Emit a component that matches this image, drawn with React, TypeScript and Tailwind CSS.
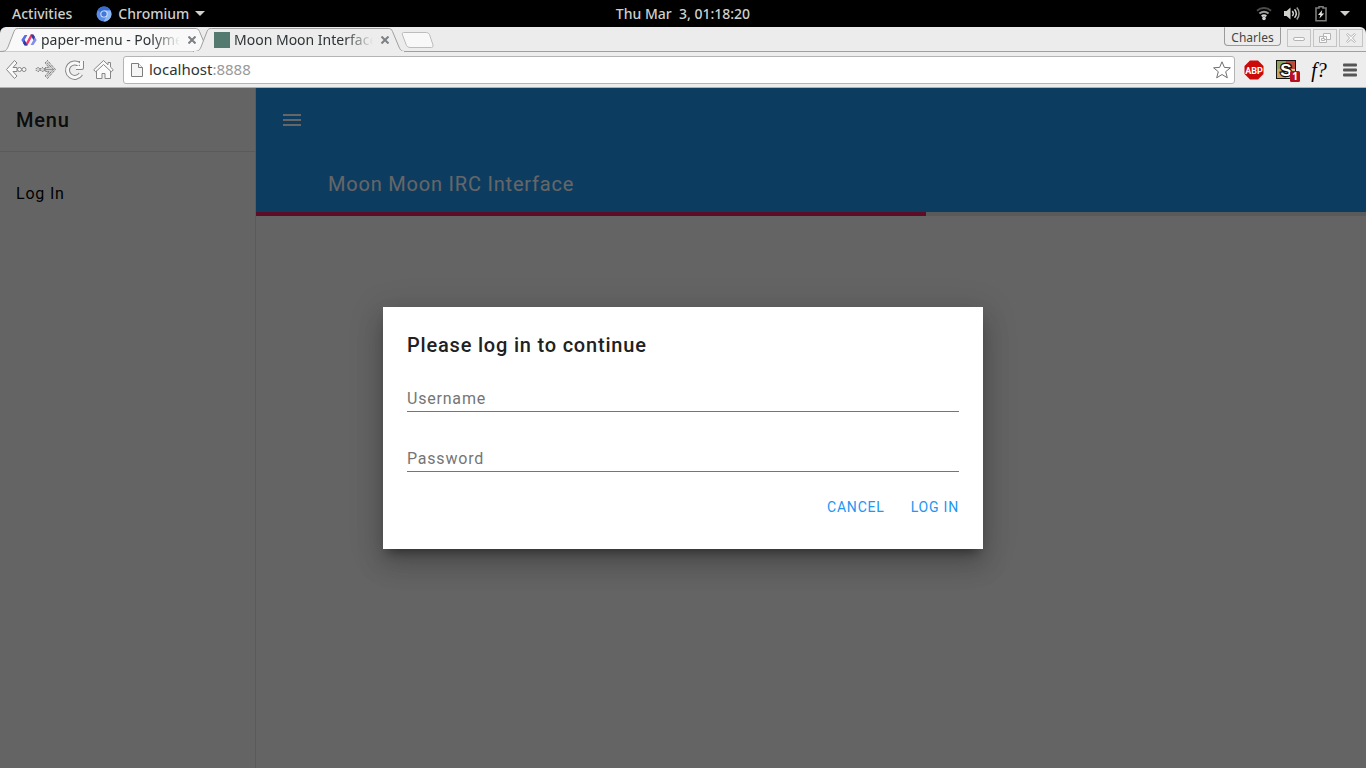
import { ReactNode, useId, useState } from "react";
import clsx from "clsx";

const TABS = [
  { id: "paper-menu", title: "paper-menu - Polymer", active: false },
  { id: "moon", title: "Moon Moon Interface", active: true },
];

const PROGRESS = 60.35;

function ChromiumLogo() {
  return (
    <svg width="16" height="16" viewBox="0 0 16 16" aria-hidden="true">
      <circle cx="8" cy="8" r="7.5" fill="#5a8ee6" />
      <path d="M8 8 1.5 4.2A7.5 7.5 0 0 1 14.6 4.5H8z" fill="#3a6bd0" />
      <path d="M14.6 4.6A7.5 7.5 0 0 1 7.6 15.5L11 9.6 8 4.6z" fill="#8db9f7" />
      <circle cx="8" cy="8" r="3.6" fill="#e4eefc" />
      <circle cx="8" cy="8" r="2.7" fill="#4377d8" />
    </svg>
  );
}

function Caret() {
  return (
    <svg width="10" height="5" viewBox="0 0 10 5" aria-hidden="true">
      <path d="M0 0h10L5 5z" fill="#d0d0cc" />
    </svg>
  );
}

function SystemBar() {
  return (
    <header className="grid h-[27px] shrink-0 grid-cols-[1fr_auto_1fr] items-center bg-black text-sm font-medium text-[#cfcfcb]">
      <div className="flex items-center gap-6 pl-3">
        <button>Activities</button>
        <button className="flex items-center gap-1.5">
          <ChromiumLogo />
          Chromium
          <Caret />
        </button>
      </div>
      <time className="whitespace-pre">Thu Mar  3, 01:18:20</time>
      <div className="flex items-center justify-end gap-3 pr-4">
        <svg width="16" height="16" viewBox="0 0 16 16" fill="none" strokeWidth="2" aria-hidden="true">
          <path d="M1 4.8c4-3.600 10-3.600 14 0" stroke="#4c4c4a" />
          <path d="M3.400 7.600c2.800-2.300 6.400-2.300 9.200 0" stroke="#9a9a97" />
          <path d="M5.600 10.200c1.600-1.100 3.200-1.100 4.800 0" stroke="#d0d0cc" />
          <circle cx="8" cy="12.400" r="1.800" fill="#d0d0cc" />
        </svg>
        <svg width="16" height="16" viewBox="0 0 16 16" fill="none" stroke="#d0d0cc" strokeWidth="1.500" aria-hidden="true">
          <path d="M0 5h2.500L6.500 1.500v12L2.500 10H0z" fill="#d0d0cc" stroke="none" />
          <path d="M8.300 5c1.200 1.500 1.200 3.600 0 5" />
          <path d="M10.500 3.200c2.200 2.600 2.200 6 0 8.600" />
          <path d="M12.800 1.500c3 3.400 3 8.600 0 12" stroke="#9a9a97" />
        </svg>
        <svg width="16" height="16" viewBox="-1 0 16 16" aria-hidden="true">
          <path d="M6 2V0.800h4V2h3v12.800H3V2z" fill="none" stroke="#7c7c7a" strokeWidth="1.600" />
          <path d="M9.200 4 5 9h2.400l-1 3.600 4.800-5.200H8.600z" fill="#e6e6e2" />
        </svg>
        <Caret />
      </div>
    </header>
  );
}

function PolymerLogo() {
  return (
    <svg width="16" height="16" viewBox="0 0 16 16" aria-hidden="true">
      <path d="M3.600 3h2.800L3.600 8l2.600 5H3.400L0.300 8z" fill="#5a6be0" />
      <path d="M12.400 3 15.700 8l-3.300 5H9.600L12.400 8l-2-3.600z" fill="#7f8fe8" />
      <path d="M9.600 2.500h2.800L6.400 13.500H3.600z" fill="#ec3a72" />
      <path d="M9.600 2.500h2.800l1.600 2.600-1.600 3z" fill="#303f9f" />
      <path d="M3.600 13.500h2.800L3.600 8 2 11z" fill="#303f9f" />
    </svg>
  );
}

function BrowserTab({ id, title, active }: { id: string; title: string; active: boolean }) {
  return (
    <div className={clsx("relative flex h-[25px] w-[212px] items-center pl-[21px]", active && "z-10 -ml-[19px]")}>
      <svg width="212" height="25" viewBox="0 0 212 25" className="absolute inset-0" aria-hidden="true">
        <path
          d="M0 24.5C5 24.5 6.500 23.500 8 20L14 4.500C15 2 16 1.500 18.500 1.500H195C197.500 1.500 198.500 2 199.500 4.500L206 20C207.500 23.500 209 24.500 212 24.500"
          fill={active ? "#ededed" : "#f9f9f9"}
          stroke="#9f9f9f"
        />
        {active && <path d="M1 24.500H211" stroke="#ededed" />}
      </svg>
      <button className="relative flex items-center gap-1 text-left">
        {id === "moon" ? <span className="size-4 bg-[#54796f]" /> : <PolymerLogo />}
        <span className="w-[139px] overflow-hidden whitespace-nowrap text-sm text-[#2e3436] [mask-image:linear-gradient(to_right,black_80%,transparent)]">
          {title}
        </span>
      </button>
      <button className="relative ml-2" aria-label="Close tab">
        <svg width="8" height="8" viewBox="0 0 8 8" stroke="#7c8082" strokeWidth="2">
          <path d="m0.500 0.500 7 7m0-7-7 7" />
        </svg>
      </button>
    </div>
  );
}

function WindowButton({ label, children }: { label: string; children: ReactNode }) {
  return (
    <button aria-label={label} className="flex h-[18px] w-6 items-center justify-center border border-[#c4c4c4]">
      <svg width="14" height="12" viewBox="0 0 14 12" fill="#fafafa" stroke="#b4b4b4">
        {children}
      </svg>
    </button>
  );
}

function TabStrip() {
  return (
    <div className="flex h-[25px] shrink-0 justify-between rounded-t-md bg-[#ececec] shadow-[inset_0_-1px_0_#9f9f9f]">
      <div className="flex">
        {TABS.map(t => <BrowserTab key={t.id} {...t} />)}
        <button aria-label="New tab" className="relative z-10 -ml-1 mt-[5px] h-4">
          <svg width="33" height="16" viewBox="0 0 33 16">
            <path d="M2.500 0.500H25.500Q27.500 0.500 28.500 2.500L32 13Q32.500 15.500 30.500 15.500H9Q6.500 15.500 5.500 13.500L1.500 3Q0.500 0.500 2.500 0.500z" fill="#f8f8f8" stroke="#bcbcbc" />
          </svg>
        </button>
      </div>
      <div className="flex items-start pr-[3px]">
        <button className="mr-1.5 h-[19px] w-[57px] rounded-b border border-[#9a9a9a] border-t-transparent pt-0.5 text-xs leading-4 text-[#444]">
          Charles
        </button>
        <div className="mt-0.5 flex gap-0.5">
          <WindowButton label="Minimize"><rect x="1.500" y="5.500" width="11" height="3" rx="1.500" /></WindowButton>
          <WindowButton label="Restore">
            <path d="M5.500 1.500h7v6h-7zM1.500 4.500h7v6h-7z" />
            <path d="M3.500 6.500h3v2h-3z" />
          </WindowButton>
          <WindowButton label="Close">
            <path d="m2.500 2.500 1-1L7 4.500l3.500-3 1 1L8.500 6l3 3.500-1 1L7 7.500l-3.500 3-1-1L5.500 6z" />
          </WindowButton>
        </div>
      </div>
    </div>
  );
}

// toolbar glyphs are a white stroke inside a wider grey one
function NavIcon({ label, dim, children }: { label: string; dim?: boolean; children: ReactNode }) {
  return (
    <button aria-label={label}>
      <svg width="21" height="22" viewBox="0 0 21 22" fill="none" strokeLinejoin="round">
        <g stroke={dim ? "#6a6a6a" : "#868686"} strokeWidth="5" strokeDasharray={dim ? "1 1" : undefined}>{children}</g>
        <g stroke={dim ? "#d4d4d4" : "#f8f8f8"} strokeWidth="3" strokeDasharray={dim ? "2 1" : undefined}>{children}</g>
      </svg>
    </button>
  );
}

function Toolbar() {
  return (
    <div className="flex h-9 shrink-0 items-center border-b border-[#b0b0b0] bg-[#ededed] pl-1.5 pr-[5px]">
      <div className="flex items-center gap-2">
        <button aria-label="Back">
          <svg width="21" height="22" viewBox="0 0 21 22" fill="#fafafa" stroke="#868686" strokeLinejoin="round">
            <path d="M8.500 1.500 0.500 10.500l8 9 2.500-2.500-4-4.500h4v-4H7L11 4z" />
            <circle cx="13.500" cy="10.500" r="2" />
            <circle cx="18" cy="10.500" r="2" />
          </svg>
        </button>
        <button aria-label="Forward">
          <svg width="21" height="22" viewBox="0 0 21 22" fill="#d2d2d2" stroke="#5c5c5c" strokeDasharray="1 1">
            <path d="m12.500 1.500 8 9-8 9L10 17l4-4.500h-4v-4h4L10 4z" />
            <path d="m12.500 4.500 6 6-6 6m-2-6h7" fill="none" />
            <circle cx="7.500" cy="10.500" r="2" />
            <circle cx="3" cy="10.500" r="2" />
          </svg>
        </button>
        <NavIcon label="Reload">
          <path d="M16.800 15A7.200 7.200 0 1 1 15.500 5.800" />
          <path d="M17.500 2v6.500H12" />
        </NavIcon>
        <button aria-label="Home">
          <svg width="21" height="22" viewBox="0 0 21 22" fill="#fafafa" stroke="#868686" strokeLinejoin="round">
            <path d="M3.500 11v8.500h5.500v-5h3v5h5.500V11l-7-6.500z" />
            <path d="M10.500 1.500 0.700 10.800l2 2 7.800-7.300 7.800 7.300 2-2-2.800-2.700V3.500h-2.500v2.300z" />
          </svg>
        </button>
      </div>
      <div className="ml-[9px] flex h-7 flex-1 items-center rounded-[3px] border border-[#b4b4b4] bg-white pl-[7px] pr-[3px]">
        <svg width="12" height="16" viewBox="0 0 12 16" fill="#f5f5f5" stroke="#7d7d7d" aria-hidden="true">
          <path d="M0.500 1.500h7l4 4v9h-11z" />
          <path d="M7.500 1.500v4h4" />
        </svg>
        <a href="#top" className="ml-1.5 flex-1 text-[15px] text-[#2e3436]">
          localhost<span className="text-[#999]">:8888</span>
        </a>
        <button aria-label="Bookmark this page">
          <svg width="18" height="18" viewBox="0 0 18 18" fill="#fff" stroke="#6e6e6e">
            <path d="m9 .8 2.400 5.600 6 .4-4.700 3.900 1.600 6.100L9 13.500l-5.300 3.300 1.600-6.100L.600 6.800l6-.4z" />
          </svg>
        </button>
      </div>
      <div className="flex items-center pl-[9px]">
        <button aria-label="Adblock Plus">
          <svg width="20" height="20" viewBox="0 0 20 20">
            <path d="M6 .5h8L19.500 6v8L14 19.500H6L.500 14V6z" fill="#cb0a0a" />
            <text x="10" y="13.500" textAnchor="middle" fontSize="9" fontWeight="700" fill="#fff" fontFamily="Roboto, sans-serif">ABP</text>
          </svg>
        </button>
        <button aria-label="Stylish" className="ml-3">
          <svg width="25" height="25" viewBox="0 0 25 25">
            <path d="M0 3h20v19H0z" fill="#111" />
            <path d="M1 4h9v8H1z" fill="#8ea35c" />
            <path d="M10 4h9v8h-9z" fill="#c04a3a" />
            <path d="M1 12h9v9H1z" fill="#c9a35c" />
            <path d="M10 12h9v9h-9z" fill="#d9c48a" />
            <text x="10" y="18.500" textAnchor="middle" fontSize="17" fontWeight="700" fill="#fff" stroke="#111" strokeWidth="2.500" paintOrder="stroke" fontFamily="Liberation Sans, sans-serif">S</text>
            <rect x="14" y="14" width="10" height="11" rx="1.500" fill="#b8101f" />
            <text x="19" y="23" textAnchor="middle" fontSize="10" fontWeight="700" fill="#fff" fontFamily="Open Sans, sans-serif">1</text>
          </svg>
        </button>
        <button className="ml-2 w-5 font-['Liberation_Serif',serif] text-xl italic leading-6 text-black">f?</button>
        <button aria-label="Browser menu" className="ml-3.5 mr-1">
          <svg width="14" height="14" viewBox="0 0 14 14" fill="#555">
            <rect y="0.500" width="14" height="3" rx="1" />
            <rect y="5.500" width="14" height="3" rx="1" />
            <rect y="10.500" width="14" height="3" rx="1" />
          </svg>
        </button>
      </div>
    </div>
  );
}

function Drawer() {
  return (
    <aside className="w-64 shrink-0 border-r border-[#e0e0e0] bg-[#fafafa]">
      <h2 className="flex h-16 items-center border-b border-[#e0e0e0] px-4 text-xl font-medium text-[#212121]">Menu</h2>
      <nav className="py-[18px]">
        <a href="#login" className="flex h-12 items-center px-4 text-base text-black">Log In</a>
      </nav>
    </aside>
  );
}

function AppHeader() {
  return (
    <header className="relative h-32 bg-[#2196f3] text-white">
      <div className="flex h-16 items-center px-4">
        <button aria-label="Toggle menu" className="p-2">
          <svg width="24" height="24" viewBox="0 0 24 24" fill="currentColor">
            <path d="M3 18h18v-2H3v2zm0-5h18v-2H3v2zm0-7v2h18V6H3z" />
          </svg>
        </button>
      </div>
      <h1 className="flex h-16 items-center pl-[72px] text-xl">Moon Moon IRC Interface</h1>
      <div role="progressbar" aria-label="Loading" aria-valuenow={PROGRESS} className="absolute inset-x-0 bottom-0 h-1 bg-[#e0e0e0]">
        <div className="h-full bg-[#e91e63]" style={{ width: `${PROGRESS}%` }} />
      </div>
    </header>
  );
}

function PaperInput({ label, type = "text" }: { label: string; type?: string }) {
  const id = useId();
  const [value, setValue] = useState("");
  return (
    <div className="relative">
      <input
        id={id}
        type={type}
        value={value}
        onChange={e => setValue(e.target.value)}
        className="block h-[25px] w-full border-b border-[#757575] bg-transparent text-base text-[#212121] outline-none focus:border-[#2196f3]"
      />
      {!value && (
        <label htmlFor={id} className="pointer-events-none absolute left-0 top-0 text-base leading-6 text-[#757575]">{label}</label>
      )}
    </div>
  );
}

function LoginDialog() {
  return (
    <div className="absolute inset-0 flex items-center justify-center bg-black/60">
      <form
        role="dialog"
        aria-labelledby="login-title"
        onSubmit={e => e.preventDefault()}
        className="w-[600px] max-w-full bg-white p-6 shadow-[0_16px_24px_2px_rgba(0,0,0,0.14),0_6px_30px_5px_rgba(0,0,0,0.12),0_8px_10px_-5px_rgba(0,0,0,0.4)]"
      >
        <h2 id="login-title" className="text-xl font-medium leading-7 text-[#212121]">Please log in to continue</h2>
        <div className="mt-7 flex flex-col gap-[35px]">
          <PaperInput label="Username" />
          <PaperInput label="Password" type="password" />
        </div>
        <div className="mt-[17px] flex h-9 justify-end gap-[26px] text-sm text-[#2196f3]">
          <button type="button" className="uppercase">Cancel</button>
          <button type="submit" className="uppercase">Log In</button>
        </div>
      </form>
    </div>
  );
}

export default function App() {
  return (
    <div className="flex min-h-screen flex-col bg-black font-['Noto_Sans','Open_Sans',sans-serif]">
      <SystemBar />
      <TabStrip />
      <Toolbar />
      <div className="relative flex flex-1 bg-[#fafafa] font-[Roboto,sans-serif] tracking-wider">
        <Drawer />
        <main className="min-w-0 flex-1">
          <AppHeader />
        </main>
        <LoginDialog />
      </div>
    </div>
  );
}
